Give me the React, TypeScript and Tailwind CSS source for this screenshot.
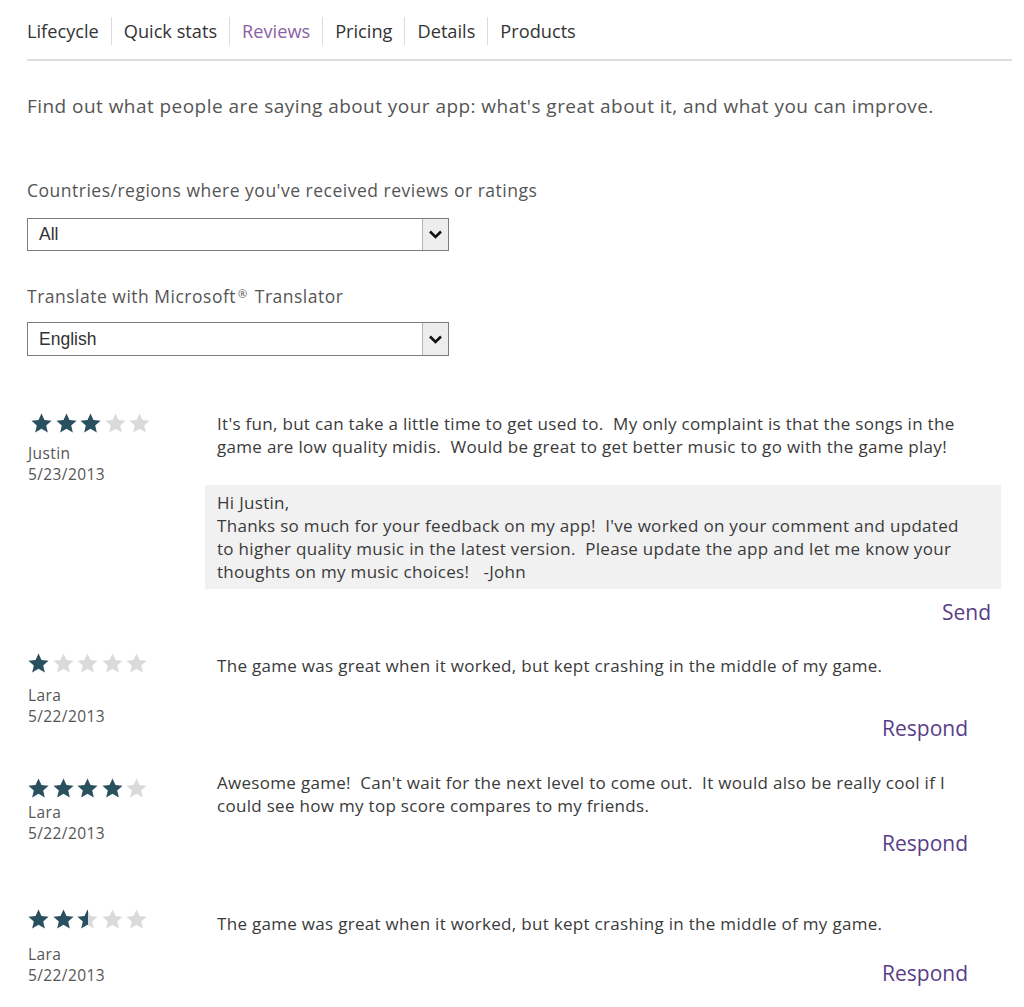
import React from 'react';

const tabs = ['Lifecycle', 'Quick stats', 'Reviews', 'Pricing', 'Details', 'Products'];

function Star({ fill }: { fill: 'full' | 'half' | 'empty' }) {
    const id = React.useId();
    const path = 'M12 1.5l3.1 6.9 7.4.7-5.6 5 1.7 7.4L12 17.6l-6.6 3.9 1.7-7.4-5.6-5 7.4-.7z';
    return (
        <svg width="23" height="23" viewBox="0 0 24 24">
            {fill === 'half' && (
                <defs>
                    <linearGradient id={id}>
                        <stop offset="50%" stopColor="#29505f" />
                        <stop offset="50%" stopColor="#dadada" />
                    </linearGradient>
                </defs>
            )}
            <path d={path} fill={fill === 'full' ? '#29505f' : fill === 'half' ? `url(#${id})` : '#dadada'} />
        </svg>
    );
}

function Stars({ rating }: { rating: number }) {
    return (
        <div className="flex gap-[1.5px] h-[23px]">
            {[1, 2, 3, 4, 5].map(i => (
                <Star key={i} fill={rating >= i ? 'full' : rating >= i - 0.5 ? 'half' : 'empty'} />
            ))}
        </div>
    );
}

function Select({ value, tall }: { value: string; tall?: boolean }) {
    return (
        <div className={`flex w-[422px] ${tall ? 'h-[34px]' : 'h-[33px]'} border border-[#7d7d7d] bg-white`}>
            <div className="flex-1 flex items-center pl-[11px] text-[17.5px] text-[#333] font-['Liberation_Sans',Arial,sans-serif]">
                {value}
            </div>
            <div className="w-[26px] bg-[#ededed] border-l border-[#b5b5b5] flex items-center justify-center">
                <svg width="15" height="11" viewBox="0 0 15 11">
                    <path d="M2 2.5l5.5 5.5 5.5-5.5" fill="none" stroke="#111" strokeWidth="2.6" />
                </svg>
            </div>
        </div>
    );
}

interface ReviewProps {
    rating: number;
    name: string;
    date: string;
    text: React.ReactNode;
    starsPad: number;
    textPad: number;
    nameGap: string;
    actionGap: string;
    starsLeft?: string;
    reply?: React.ReactNode;
    action: string;
    className?: string;
}

function Review({ rating, name, date, text, starsPad, textPad, nameGap, actionGap, starsLeft = '', reply, action, className }: ReviewProps) {
    return (
        <div className={`flex ${className ?? ''}`}>
            <div className="w-[190px] shrink-0" style={{ paddingTop: starsPad }}>
                <div className={starsLeft}>
                    <Stars rating={rating} />
                </div>
                <div className={`${nameGap} pl-px text-[15.5px] leading-[21px] tracking-[0.4px] text-[#555]`}>
                    <div>{name}</div>
                    <div>{date}</div>
                </div>
            </div>
            <div className="flex-1 flex flex-col" style={{ paddingTop: textPad }}>
                <p className="text-[17px] leading-[23px] text-[#3a3a3a] tracking-[0.3px] pr-[24px]">{text}</p>
                {reply}
                <div className={`${actionGap} flex justify-end ${reply ? 'pr-[10px]' : 'pr-[33px]'}`}>
                    <button className="text-[21px] leading-[26px] text-[#5a3d88]">{action}</button>
                </div>
            </div>
        </div>
    );
}

export default function App() {
    return (
        <div className="min-h-[1007px] bg-white font-['Open_Sans','Noto_Sans',sans-serif] pl-[27px] pr-[23px] pt-[17px]">
            {/* Tabs */}
            <div className="flex items-center h-[28px] text-[18.2px] text-[#333]">
                {tabs.map((t, i) => (
                    <div
                        key={t}
                        className={`${i === 0 ? 'pr-[12px]' : 'px-[12px] border-l border-[#dcdcdc]'} leading-[28px] ${t === 'Reviews' ? 'text-[#8b5fa6]' : ''}`}
                    >
                        {t}
                    </div>
                ))}
            </div>
            <div className="mt-[14px] -mr-[11px] h-[2px] bg-[#dedede]" />

            <p className="mt-[32px] text-[19px] leading-[26px] text-[#555] tracking-[0.45px]">
                Find out what people are saying about your app: what's great about it, and what you can improve.
            </p>

            <div className="mt-[59px] text-[17.5px] leading-[24px] text-[#555] tracking-[0.5px]">Countries/regions where you've received reviews or ratings</div>
            <div className="mt-[16px]">
                <Select value="All" />
            </div>

            <div className="mt-[33px] text-[17.5px] leading-[24px] text-[#555] tracking-[0.5px]">
                Translate with Microsoft<span className="text-[11px] relative -top-[5px] px-[2px]">®</span> Translator
            </div>
            <div className="mt-[11px]">
                <Select value="English" tall />
            </div>

            <div className="mt-[56px] flex flex-col">
                <Review
                    rating={3}
                    name="Justin"
                    date="5/23/2013"
                    starsPad={0}
                    textPad={0}
                    nameGap="mt-[8px]"
                    starsLeft="pl-[3px]"
                    text={<>It's fun, but can take a little time to get used to.&nbsp; My only complaint is that the songs in the game are low quality midis.&nbsp; Would be great to get better music to go with the game play!</>}
                    reply={
                        <div className="mt-[27px] -ml-[12px] bg-[#f1f1f1] pl-[12px] pr-[24px] pt-[6px] pb-[6px] text-[17px] leading-[23px] text-[#3a3a3a] tracking-[0.3px]">
                            <div>Hi Justin,</div>
                            <div>
                                Thanks so much for your feedback on my app!&nbsp; I've worked on your comment and updated to higher quality music in the latest version.&nbsp; Please update the app and let me know your thoughts on my music choices!&nbsp;&nbsp; -John
                            </div>
                        </div>
                    }
                    actionGap="mt-[10px]"
                    action="Send"
                />
                <Review
                    className="mt-[27px]"
                    rating={1}
                    name="Lara"
                    date="5/22/2013"
                    starsPad={0}
                    textPad={2}
                    nameGap="mt-[10px]"
                    text="The game was great when it worked, but kept crashing in the middle of my game."
                    actionGap="mt-[38px]"
                    action="Respond"
                />
                <Review
                    className="mt-[30px]"
                    rating={4}
                    name="Lara"
                    date="5/22/2013"
                    starsPad={6}
                    textPad={0}
                    nameGap="mt-[2px]"
                    text={<>Awesome game!&nbsp; Can't wait for the next level to come out.&nbsp; It would also be really cool if I could see how my top score compares to my friends.</>}
                    actionGap="mt-[13px]"
                    action="Respond"
                />
                <Review
                    className="mt-[52px]"
                    rating={2.5}
                    name="Lara"
                    date="5/22/2013"
                    starsPad={0}
                    textPad={4}
                    nameGap="mt-[13px]"
                    text="The game was great when it worked, but kept crashing in the middle of my game."
                    actionGap="mt-[25px]"
                    action="Respond"
                />
            </div>
        </div>
    );
}
